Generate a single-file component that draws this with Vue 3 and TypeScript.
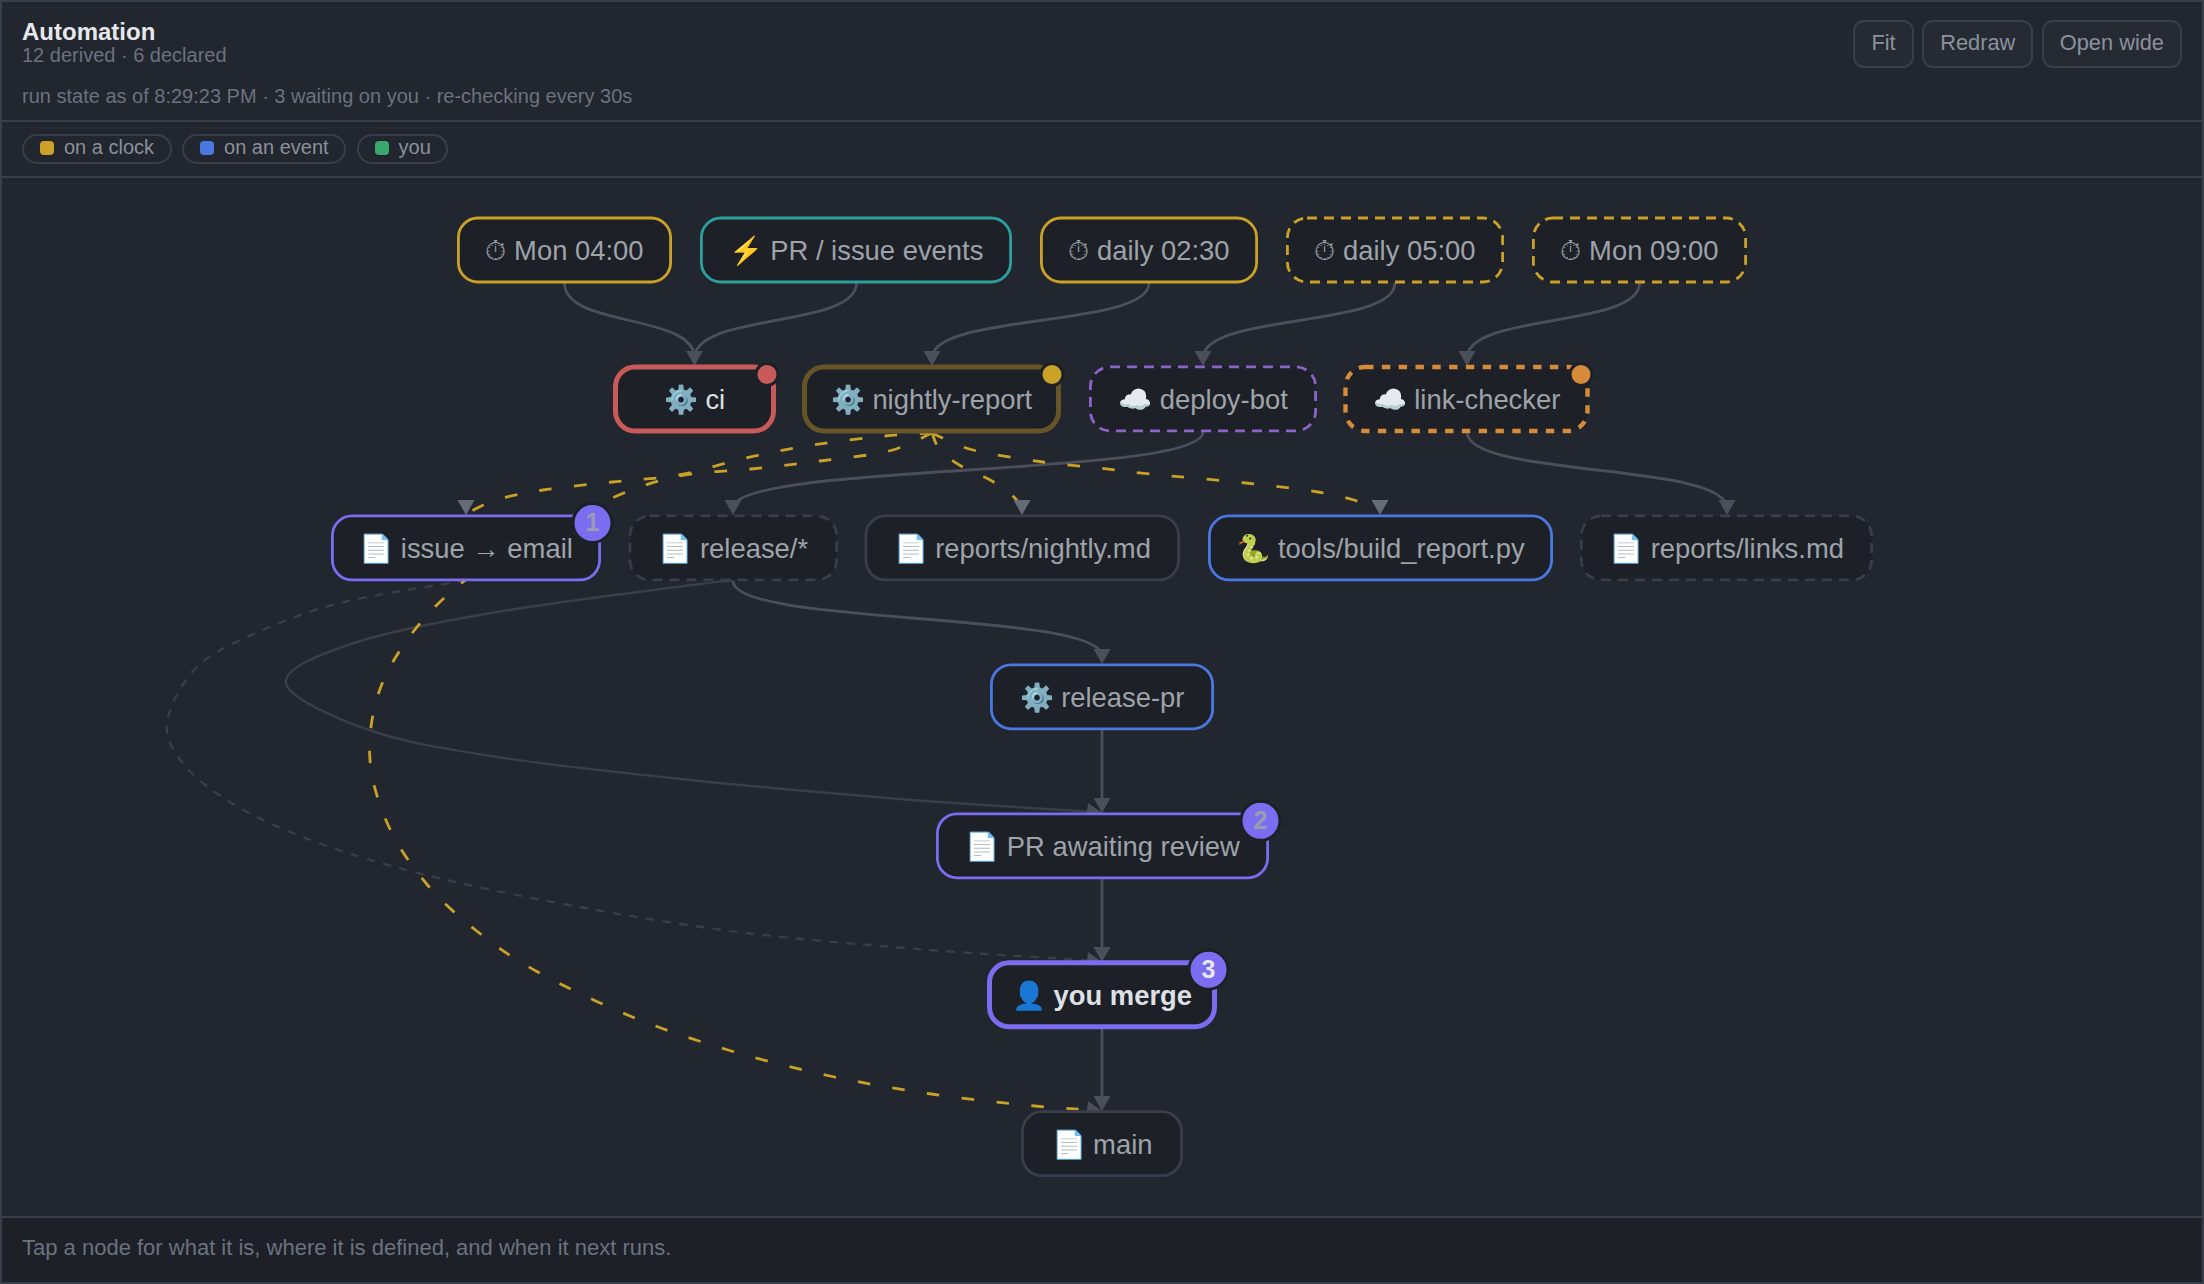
<script setup lang="ts">
type Pt = [number, number]

interface GraphNode {
  label: string
  icon: string
  left: number
  right: number
  row: number
  tone: string
  dashed?: boolean
  heavy?: boolean
  bright?: boolean
  bold?: boolean
  dot?: string
  badge?: string
}

const rowY = (row: number): number => 250 + row * 148.95

const nodes: GraphNode[] = [
  { label: 'Mon 04:00', icon: '⏱', left: 457, right: 672, row: 0, tone: 'clock' },
  { label: 'PR / issue events', icon: '⚡', left: 700, right: 1012, row: 0, tone: 'event' },
  { label: 'daily 02:30', icon: '⏱', left: 1040, right: 1258, row: 0, tone: 'clock' },
  { label: 'daily 05:00', icon: '⏱', left: 1286, right: 1504, row: 0, tone: 'clock', dashed: true },
  { label: 'Mon 09:00', icon: '⏱', left: 1532, right: 1747, row: 0, tone: 'clock', dashed: true },
  { label: 'ci', icon: '⚙️', left: 613, right: 776, row: 1, tone: 'red', heavy: true, bright: true, dot: 'red' },
  { label: 'nightly-report', icon: '⚙️', left: 802, right: 1061, row: 1, tone: 'olive', heavy: true, dot: 'clock' },
  { label: 'deploy-bot', icon: '☁️', left: 1089, right: 1317, row: 1, tone: 'purple', dashed: true },
  { label: 'link-checker', icon: '☁️', left: 1343, right: 1590, row: 1, tone: 'orange', dashed: true, heavy: true, dot: 'orange' },
  { label: 'issue → email', icon: '📄', left: 331, right: 601, row: 2, tone: 'violet', badge: '1' },
  { label: 'release/*', icon: '📄', left: 628.5, right: 838, row: 2, tone: 'grey', dashed: true },
  { label: 'reports/nightly.md', icon: '📄', left: 864.5, right: 1180, row: 2, tone: 'grey' },
  { label: 'tools/build_report.py', icon: '🐍', left: 1208, right: 1553, row: 2, tone: 'blue' },
  { label: 'reports/links.md', icon: '📄', left: 1580, right: 1873, row: 2, tone: 'grey', dashed: true },
  { label: 'release-pr', icon: '⚙️', left: 990, right: 1214, row: 3, tone: 'blue' },
  { label: 'PR awaiting review', icon: '📄', left: 936, right: 1269, row: 4, tone: 'violet', badge: '2' },
  { label: 'you merge', icon: '👤', left: 987, right: 1217, row: 5, tone: 'violet', heavy: true, bright: true, bold: true, badge: '3' },
  { label: 'main', icon: '📄', left: 1021, right: 1183, row: 6, tone: 'grey' },
]

// S-shaped link between two ranks
const sCurve = (x0: number, y0: number, x1: number, y1: number): string => {
  const h = y1 - y0
  return `M${x0} ${y0} C${x0} ${y0 + h * 0.6} ${x1} ${y0 + h * 0.4} ${x1} ${y1}`
}

// smooth line through measured points (catmull-rom)
const through = (pts: Pt[]): string => {
  let d = `M${pts[0][0]} ${pts[0][1]}`
  for (let i = 0; i < pts.length - 1; i++) {
    const p0 = pts[Math.max(i - 1, 0)]
    const p1 = pts[i]
    const p2 = pts[i + 1]
    const p3 = pts[Math.min(i + 2, pts.length - 1)]
    const c1x = p1[0] + (p2[0] - p0[0]) / 6
    const c1y = p1[1] + (p2[1] - p0[1]) / 6
    const c2x = p2[0] - (p3[0] - p1[0]) / 6
    const c2y = p2[1] - (p3[1] - p1[1]) / 6
    d += ` C${c1x.toFixed(1)} ${c1y.toFixed(1)} ${c2x.toFixed(1)} ${c2y.toFixed(1)} ${p2[0]} ${p2[1]}`
  }
  return d
}

const edges: { d: string; kind: string }[] = [
  { d: sCurve(564.5, 283, 694.5, 358), kind: 'solid' },
  { d: sCurve(856.5, 283, 694.5, 358), kind: 'solid' },
  { d: sCurve(1149, 283, 932, 358), kind: 'solid' },
  { d: sCurve(1395, 283, 1203, 358), kind: 'solid' },
  { d: sCurve(1639.5, 283, 1467, 358), kind: 'solid' },
  { d: sCurve(1203, 432, 733, 508), kind: 'solid' },
  { d: sCurve(1467, 432, 1727, 508), kind: 'solid' },
  { d: sCurve(733, 581, 1102, 656), kind: 'solid' },
  { d: 'M1102 730 V806', kind: 'solid' },
  { d: 'M1102 879 V955', kind: 'solid' },
  { d: 'M1102 1028 V1104', kind: 'solid' },
  {
    d: through([[733, 581], [700, 584], [497, 612], [354, 643], [286, 683], [369, 730], [497, 757], [700, 781], [900, 799], [1000, 806], [1095, 812]]),
    kind: 'faint',
  },
  {
    d: through([[466, 581], [450.7, 583], [340, 603], [258, 632], [197, 667], [167, 723], [186, 767], [240, 808], [318.6, 843], [426, 875], [568.6, 905], [738, 932], [917, 949], [1067, 959], [1095, 961]]),
    kind: 'faintDash',
  },
  {
    d: through([[932, 433], [885, 436], [813, 445], [746, 458], [679, 475], [612, 482], [543, 490], [496, 500], [466, 514]]),
    kind: 'amber',
  },
  {
    d: through([[932, 433], [889, 451], [820, 461], [751, 469], [679, 476], [612, 498], [530, 540], [463, 582], [413, 632], [379, 692], [370, 760], [389, 827], [427.5, 885], [478, 932], [536, 971], [630, 1016], [728, 1050], [830, 1076], [931.4, 1094], [1035, 1106], [1095, 1110]]),
    kind: 'amber',
  },
  {
    d: through([[932, 433], [940, 450], [961, 466], [992, 481], [1014, 497], [1022, 510]]),
    kind: 'amber',
  },
  {
    d: through([[932, 433], [973, 450], [1043, 462], [1100, 468], [1150, 474], [1246, 483], [1318, 492], [1354, 500], [1380, 510]]),
    kind: 'amber',
  },
]

// tip position, rotation in degrees from pointing down
const arrows: { x: number; y: number; a: number; lit?: boolean }[] = [
  { x: 694.5, y: 366, a: 0 },
  { x: 932, y: 366, a: 0 },
  { x: 1203, y: 366, a: 0 },
  { x: 1467, y: 366, a: 0 },
  { x: 466, y: 515, a: 0, lit: true },
  { x: 733, y: 515, a: 0 },
  { x: 1022, y: 515, a: 0, lit: true },
  { x: 1380, y: 515, a: 0, lit: true },
  { x: 1727, y: 515, a: 0 },
  { x: 1102, y: 664, a: 0 },
  { x: 1102, y: 813, a: -84 },
  { x: 1102, y: 962, a: -84 },
  { x: 1102, y: 1111, a: -84 },
  { x: 1102, y: 813, a: 0 },
  { x: 1102, y: 962, a: 0 },
  { x: 1102, y: 1111, a: 0 },
]

const HALF = 32

const boxX = (n: GraphNode): number => n.left + (n.heavy ? 2.5 : 1.4)
const boxW = (n: GraphNode): number => n.right - n.left - (n.heavy ? 5 : 2.8)
</script>

<template>
  <div class="shell">
    <header class="head">
      <div class="head-top">
        <div class="titles">
          <div class="title">Automation</div>
          <div class="sub">12 derived · 6 declared</div>
        </div>
        <div class="actions">
          <button class="btn">Fit</button>
          <button class="btn">Redraw</button>
          <button class="btn">Open wide</button>
        </div>
      </div>
      <div class="state">run state as of 8:29:23 PM · 3 waiting on you · re-checking every 30s</div>
    </header>

    <div class="legend">
      <span class="pill"><i class="swatch clock"></i>on a clock</span>
      <span class="pill"><i class="swatch event"></i>on an event</span>
      <span class="pill"><i class="swatch you"></i>you</span>
    </div>

    <div class="canvas">
      <svg class="graph" viewBox="2 178 2200 1038" width="2200" height="1038">
        <path v-for="(e, i) in edges" :key="i" :d="e.d" class="edge" :class="e.kind" />
        <polygon
          v-for="(a, i) in arrows"
          :key="'a' + i"
          class="arrow"
          :class="{ lit: a.lit }"
          points="-8.5,-15 8.5,-15 0,0"
          :transform="`translate(${a.x} ${a.y}) rotate(${a.a})`"
        />
        <g v-for="n in nodes" :key="n.label">
          <rect
            class="box"
            :class="[n.tone, { dashed: n.dashed, heavy: n.heavy }]"
            :x="boxX(n)"
            :y="rowY(n.row) - HALF"
            :width="boxW(n)"
            :height="HALF * 2"
            rx="19.6"
          />
          <text
            class="label"
            :class="{ bright: n.bright, bold: n.bold }"
            :x="(n.left + n.right) / 2"
            :y="rowY(n.row) + 10"
          >{{ n.icon }} {{ n.label }}</text>
          <circle v-if="n.dot" class="dot" :class="n.dot" :cx="n.right - 9" :cy="rowY(n.row) - 24.5" r="11" />
          <template v-if="n.badge">
            <circle class="badge" :cx="n.right - 8.5" :cy="rowY(n.row) - 25" r="19.5" />
            <text class="badge-text" :class="{ bright: n.bold }" :x="n.right - 8.5" :y="rowY(n.row) - 16.5">{{ n.badge }}</text>
          </template>
        </g>
      </svg>
    </div>

    <footer class="foot">Tap a node for what it is, where it is defined, and when it next runs.</footer>
  </div>
</template>

<style scoped>
.shell {
  width: 2204px;
  height: 1284px;
  box-sizing: border-box;
  border: 2px solid #3a3e4a;
  background: #22262e;
  display: flex;
  flex-direction: column;
  font-family: "Liberation Sans", Arial, sans-serif;
  color: #8b919b;
  overflow: hidden;
}
.head {
  height: 118px;
  box-sizing: border-box;
  padding: 18px 20px 0;
}
.head-top {
  display: flex;
  justify-content: space-between;
  align-items: flex-start;
}
.title {
  font-size: 24px;
  line-height: 24px;
  font-weight: 700;
  color: #e6e8ec;
}
.sub {
  font-size: 20px;
  line-height: 22px;
  color: #6b7280;
}
.state {
  margin-top: 17px;
  font-size: 20px;
  line-height: 22px;
  color: #6b7280;
}
.actions {
  display: flex;
  gap: 8.5px;
}
.btn {
  height: 48px;
  box-sizing: border-box;
  padding: 0 16px 2px;
  border: 2px solid #3a3e4a;
  border-radius: 11px;
  background: #262a33;
  color: #8b929c;
  font-family: inherit;
  font-size: 21.8px;
}
.legend {
  height: 58px;
  box-sizing: border-box;
  border-top: 2px solid #3a3e4a;
  border-bottom: 2px solid #3a3e4a;
  padding: 12px 20px 0;
  display: flex;
  align-items: flex-start;
  gap: 10.5px;
}
.pill {
  height: 30px;
  box-sizing: border-box;
  display: inline-flex;
  align-items: center;
  gap: 10px;
  padding: 0 15.5px 3px 16px;
  border: 2px solid #3a3e4a;
  border-radius: 15px;
  font-size: 20px;
  color: #8b919b;
}
.swatch {
  width: 14px;
  height: 14px;
  border-radius: 4px;
}
.swatch.clock { background: #c9a227; }
.swatch.event { background: #4a78e0; }
.swatch.you { background: #3aa76d; }
.canvas {
  flex: 1;
  min-height: 0;
}
.graph {
  display: block;
}
.edge {
  fill: none;
  stroke: #4b4f5b;
  stroke-width: 2.8;
}
.edge.faint {
  stroke: #3a3e4a;
  stroke-width: 2.4;
}
.edge.faintDash {
  stroke: #3a3e4a;
  stroke-width: 2.4;
  stroke-dasharray: 8.4 8.4;
}
.edge.amber {
  stroke: #c9a227;
  stroke-dasharray: 12.6 22.4;
}
.arrow {
  fill: #4b4f5b;
}
.arrow.lit {
  fill: #666b78;
}
.box {
  fill: #1d2027;
  stroke: #3a3e4a;
  stroke-width: 2.8;
}
.box.dashed { stroke-dasharray: 10 7; }
.box.heavy { stroke-width: 5; }
.box.heavy.dashed { stroke-width: 4.4; stroke-dasharray: 8.4 8.4; }
.box.clock { stroke: #c9a227; }
.box.event { stroke: #2f9e9e; }
.box.red { stroke: #c85a5a; }
.box.olive { stroke: #655528; }
.box.purple { stroke: #8e63c9; }
.box.orange { stroke: #d68b3a; }
.box.violet { stroke: #7b6cf0; }
.box.blue { stroke: #4a78e0; }
.box.grey { stroke: #3a3e4a; }
.label {
  font-size: 27.4px;
  text-anchor: middle;
  fill: #9ea3aa;
}
.label.bright { fill: #dde0e5; }
.label.bold { font-weight: 700; }
.dot {
  stroke: #1d2027;
  stroke-width: 3;
}
.dot.red { fill: #c85a5a; }
.dot.clock { fill: #c9a227; }
.dot.orange { fill: #d68b3a; }
.badge {
  fill: #7b6cf0;
  stroke: #1d2027;
  stroke-width: 3;
}
.badge-text {
  font-size: 25px;
  font-weight: 700;
  text-anchor: middle;
  fill: #9c9cb0;
}
.badge-text.bright { fill: #e6e8ec; }
.foot {
  height: 66px;
  box-sizing: border-box;
  border-top: 2px solid #3a3e4a;
  background: #1d2027;
  padding: 0 20px 4px;
  display: flex;
  align-items: center;
  font-size: 22px;
  color: #6b7280;
}
</style>

<style>
html, body {
  background: #22262e;
}
</style>
